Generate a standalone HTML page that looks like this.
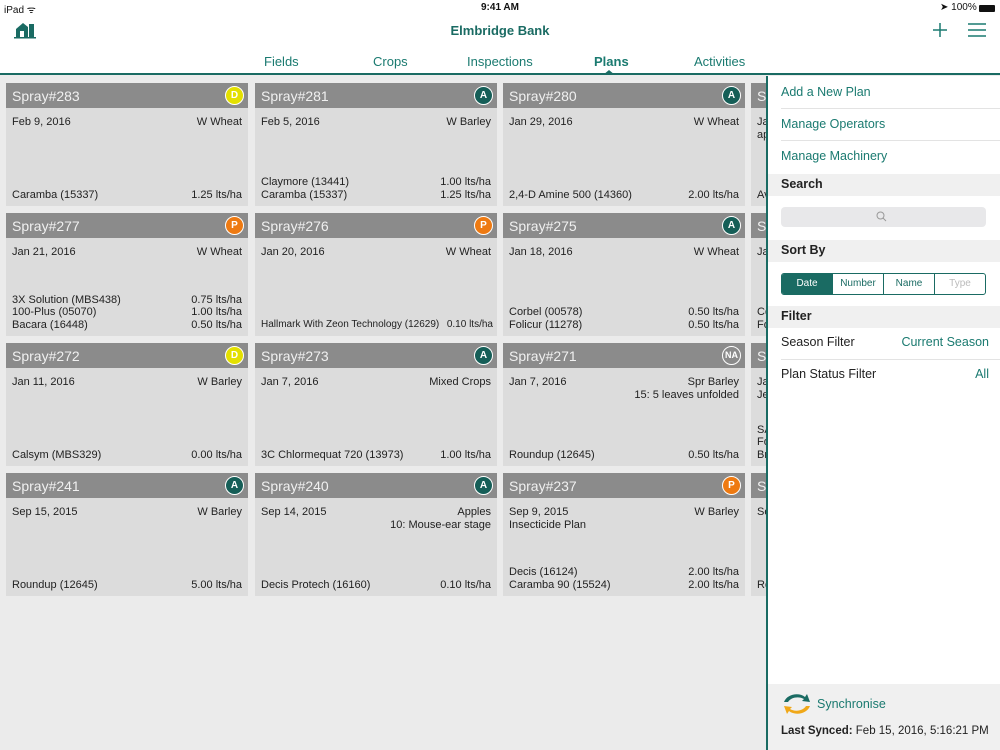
<!DOCTYPE html>
<html><head><meta charset="utf-8"><style>
*{margin:0;padding:0;box-sizing:border-box}
body{width:1000px;height:750px;overflow:hidden;background:#ebebeb;font-family:"Liberation Sans",sans-serif;position:relative;color:#222}
.top{position:absolute;left:0;top:0;width:1000px;height:75px;background:#fff;border-bottom:2px solid #1a6b63}
.sb{position:absolute;top:2px;font-size:10px;color:#111}
.title{position:absolute;top:23px;left:0;width:1000px;text-align:center;font-size:13px;font-weight:bold;color:#1a6b63}
.tab{position:absolute;top:54px;font-size:13px;color:#1a7a70}
.card{position:absolute;width:242px;height:123px;background:#dcdcdc;overflow:hidden}
.hd{height:25px;background:#8b8b8b;color:#f0f0f0;font-size:14px;padding:5px 6px;position:relative}
.bd{position:absolute;left:6px;right:6px;font-size:11px;color:#222;line-height:12.5px}
.r{margin-left:auto;text-align:right;padding-left:4px;flex-shrink:0}
.top1{top:33px}
.bot{bottom:5px}
.bd div{overflow:hidden;white-space:nowrap;display:flex;height:12.5px}
.bg{position:absolute;right:4px;top:3px;width:19px;height:19px;border-radius:50%;font-size:10px;font-weight:bold;color:#fff;text-align:center;line-height:17px}
.D{background:#e4e000;border:1px solid #fff}
.A{background:#155e57;border:1px solid #fff}
.P{background:#ee7a12;border:1px solid #fff}
.NA{background:#8b8b8b;border:1px solid #fff;font-size:9px}
.panel{position:absolute;left:766px;top:76px;width:234px;height:674px;background:#fff;border-left:2px solid #1a6b63}
.it{position:absolute;left:13px;font-size:12.5px;color:#1a7a70}
.sec{position:absolute;left:0;width:232px;height:22px;background:#f0f0f0;font-size:12.5px;font-weight:bold;padding:3px 13px;color:#222}
.ln{position:absolute;left:13px;right:0;height:1px;background:#e3e3e3}
</style></head><body>
<div class="top">
<div class="sb" style="left:4px">iPad ᯤ</div>
<div class="sb" style="left:0;width:1000px;text-align:center;font-weight:bold">9:41 AM</div>
<div class="sb" style="left:940px">➤ 100%</div>
<div style="position:absolute;left:979px;top:5px;width:16px;height:7px;background:#111;border-radius:1px"></div>
<svg style="position:absolute;left:14px;top:21px" width="22" height="18" viewBox="0 0 22 18"><path d="M2 8 L9 2 L14 6 L14 16 L2 16Z" fill="#1a6b63"/><rect x="15" y="3" width="5" height="13" fill="#1a6b63"/><rect x="6" y="10" width="4" height="6" fill="#fff"/><rect x="0" y="16" width="22" height="1.5" fill="#1a6b63"/></svg>
<div class="title">Elmbridge Bank</div>
<svg style="position:absolute;left:932px;top:22px" width="16" height="16"><path d="M8 1V15M1 8H15" stroke="#1a7a70" stroke-width="1.5"/></svg>
<svg style="position:absolute;left:968px;top:22px" width="18" height="16"><path d="M0 2H18M0 8H18M0 14H18" stroke="#1a7a70" stroke-width="1.5"/></svg>
<div class="tab" style="left:264px">Fields</div>
<div class="tab" style="left:373px">Crops</div>
<div class="tab" style="left:467px">Inspections</div>
<div class="tab" style="left:594px;font-weight:bold">Plans</div>
<div class="tab" style="left:694px">Activities</div>
<div style="position:absolute;left:603px;top:70px;width:0;height:0;border-left:6px solid transparent;border-right:6px solid transparent;border-bottom:5px solid #1a6b63"></div>
</div>

<div class="card" style="left:6px;top:83px"><div class="hd">Spray#283<div class="bg D">D</div></div><div class="bd top1"><div>Feb 9, 2016<span class="r">W Wheat</span></div></div><div class="bd bot"><div>Caramba (15337)<span class="r">1.25 lts/ha</span></div></div></div>
<div class="card" style="left:255px;top:83px"><div class="hd">Spray#281<div class="bg A">A</div></div><div class="bd top1"><div>Feb 5, 2016<span class="r">W Barley</span></div></div><div class="bd bot"><div>Claymore (13441)<span class="r">1.00 lts/ha</span></div><div>Caramba (15337)<span class="r">1.25 lts/ha</span></div></div></div>
<div class="card" style="left:503px;top:83px"><div class="hd">Spray#280<div class="bg A">A</div></div><div class="bd top1"><div>Jan 29, 2016<span class="r">W Wheat</span></div></div><div class="bd bot"><div>2,4-D Amine 500 (14360)<span class="r">2.00 lts/ha</span></div></div></div>
<div class="card" style="left:751px;top:83px"><div class="hd">S</div><div class="bd top1"><div>Ja</div><div>ap</div></div><div class="bd bot"><div>Av</div></div></div>

<div class="card" style="left:6px;top:213px"><div class="hd">Spray#277<div class="bg P">P</div></div><div class="bd top1"><div>Jan 21, 2016<span class="r">W Wheat</span></div></div><div class="bd bot"><div>3X Solution (MBS438)<span class="r">0.75 lts/ha</span></div><div>100-Plus (05070)<span class="r">1.00 lts/ha</span></div><div>Bacara (16448)<span class="r">0.50 lts/ha</span></div></div></div>
<div class="card" style="left:255px;top:213px"><div class="hd">Spray#276<div class="bg P">P</div></div><div class="bd top1"><div>Jan 20, 2016<span class="r">W Wheat</span></div></div><div class="bd bot" style="right:4px"><div style="font-size:10px"><span>Hallmark With Zeon Technology (12629)</span><span class="r">0.10 lts/ha</span></div></div></div>
<div class="card" style="left:503px;top:213px"><div class="hd">Spray#275<div class="bg A">A</div></div><div class="bd top1"><div>Jan 18, 2016<span class="r">W Wheat</span></div></div><div class="bd bot"><div>Corbel (00578)<span class="r">0.50 lts/ha</span></div><div>Folicur (11278)<span class="r">0.50 lts/ha</span></div></div></div>
<div class="card" style="left:751px;top:213px"><div class="hd">S</div><div class="bd top1"><div>Ja</div></div><div class="bd bot"><div>Co</div><div>Fo</div></div></div>

<div class="card" style="left:6px;top:343px"><div class="hd">Spray#272<div class="bg D">D</div></div><div class="bd top1"><div>Jan 11, 2016<span class="r">W Barley</span></div></div><div class="bd bot"><div>Calsym (MBS329)<span class="r">0.00 lts/ha</span></div></div></div>
<div class="card" style="left:255px;top:343px"><div class="hd">Spray#273<div class="bg A">A</div></div><div class="bd top1"><div>Jan 7, 2016<span class="r">Mixed Crops</span></div></div><div class="bd bot"><div>3C Chlormequat 720 (13973)<span class="r">1.00 lts/ha</span></div></div></div>
<div class="card" style="left:503px;top:343px"><div class="hd">Spray#271<div class="bg NA">NA</div></div><div class="bd top1"><div>Jan 7, 2016<span class="r">Spr Barley</span></div><div><span class="r">15: 5 leaves unfolded</span></div></div><div class="bd bot"><div>Roundup (12645)<span class="r">0.50 lts/ha</span></div></div></div>
<div class="card" style="left:751px;top:343px"><div class="hd">S</div><div class="bd top1"><div>Ja</div><div>Je</div></div><div class="bd bot"><div>SA</div><div>Fo</div><div>Br</div></div></div>

<div class="card" style="left:6px;top:473px"><div class="hd">Spray#241<div class="bg A">A</div></div><div class="bd top1"><div>Sep 15, 2015<span class="r">W Barley</span></div></div><div class="bd bot"><div>Roundup (12645)<span class="r">5.00 lts/ha</span></div></div></div>
<div class="card" style="left:255px;top:473px"><div class="hd">Spray#240<div class="bg A">A</div></div><div class="bd top1"><div>Sep 14, 2015<span class="r">Apples</span></div><div><span class="r">10: Mouse-ear stage</span></div></div><div class="bd bot"><div>Decis Protech (16160)<span class="r">0.10 lts/ha</span></div></div></div>
<div class="card" style="left:503px;top:473px"><div class="hd">Spray#237<div class="bg P">P</div></div><div class="bd top1"><div>Sep 9, 2015<span class="r">W Barley</span></div><div>Insecticide Plan</div></div><div class="bd bot"><div>Decis (16124)<span class="r">2.00 lts/ha</span></div><div>Caramba 90 (15524)<span class="r">2.00 lts/ha</span></div></div></div>
<div class="card" style="left:751px;top:473px"><div class="hd">S</div><div class="bd top1"><div>Se</div></div><div class="bd bot"><div>Ro</div></div></div>

<div class="panel">
<div class="it" style="top:9px">Add a New Plan</div>
<div class="ln" style="top:32px"></div>
<div class="it" style="top:41px">Manage Operators</div>
<div class="ln" style="top:64px"></div>
<div class="it" style="top:73px">Manage Machinery</div>
<div class="sec" style="top:98px">Search</div>
<div style="position:absolute;left:13px;top:131px;width:205px;height:20px;background:#e8e8ea;border-radius:4px"></div>
<svg style="position:absolute;left:108px;top:135px" width="11" height="11"><circle cx="4.5" cy="4.5" r="3.5" stroke="#999" fill="none"/><path d="M7 7L10 10" stroke="#999"/></svg>
<div class="sec" style="top:164px">Sort By</div>
<div style="position:absolute;left:13px;top:197px;width:205px;height:22px;border:1px solid #1a6b63;border-radius:3px;display:flex;font-size:10px;overflow:hidden">
<div style="flex:1;background:#1a6b63;color:#fff;text-align:center;line-height:20px">Date</div>
<div style="flex:1;color:#1a6b63;text-align:center;line-height:20px;border-left:1px solid #1a6b63">Number</div>
<div style="flex:1;color:#1a6b63;text-align:center;line-height:20px;border-left:1px solid #1a6b63">Name</div>
<div style="flex:1;color:#bbb;text-align:center;line-height:20px;border-left:1px solid #1a6b63">Type</div></div>
<div class="sec" style="top:230px">Filter</div>
<div class="it" style="top:259px;color:#222">Season Filter</div>
<div class="it" style="top:259px;left:auto;right:11px">Current Season</div>
<div class="ln" style="top:283px"></div>
<div class="it" style="top:291px;color:#222">Plan Status Filter</div>
<div class="it" style="top:291px;left:auto;right:11px">All</div>
<div style="position:absolute;left:0;top:608px;width:232px;height:66px;background:#f0f0f0">
<svg style="position:absolute;left:13px;top:6px" width="32" height="28" viewBox="0 0 32 28"><path d="M3 12 C6 4 18 2 24 7 L26 4 L29 12 L21 11 L23 9 C18 6 10 7 7 12Z" fill="#1a6b63"/><path d="M29 16 C26 24 14 26 8 21 L6 24 L3 16 L11 17 L9 19 C14 22 22 21 25 16Z" fill="#f0a818"/></svg>
<div class="it" style="top:13px;left:49px">Synchronise</div>
<div style="position:absolute;left:13px;top:41px;font-size:11.5px;color:#222"><b>Last Synced:</b> Feb 15, 2016, 5:16:21 PM</div>
</div>
</div>
</body></html>
